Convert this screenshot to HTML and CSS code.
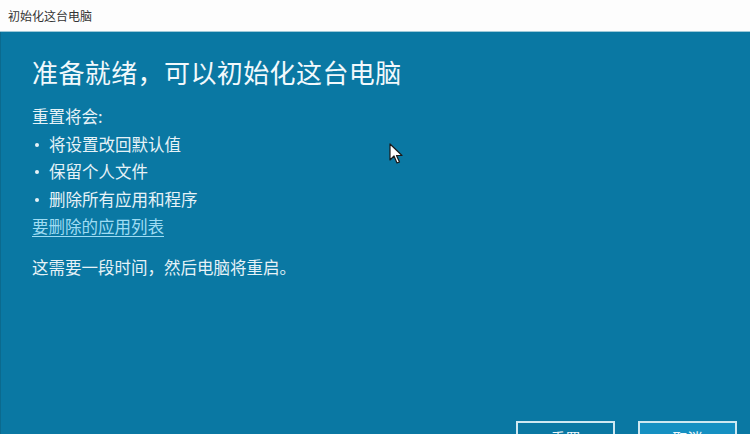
FILE: index.html
```html
<!DOCTYPE html>
<html lang="zh-CN">
<head>
<meta charset="utf-8">
<title>初始化这台电脑</title>
<link rel="stylesheet" href="styles.css">
</head>
<body>
<div class="window">
  <div class="titlebar">初始化这台电脑</div>
  <div class="content">
    <h1 class="heading">准备就绪，可以初始化这台电脑</h1>
    <p class="line">重置将会:</p>
    <ul class="list">
      <li>将设置改回默认值</li>
      <li>保留个人文件</li>
      <li>删除所有应用和程序</li>
    </ul>
    <a class="link" href="#">要删除的应用列表</a>
    <p class="line note">这需要一段时间，然后电脑将重启。</p>
    <div class="footer">
      <button class="btn">重置</button>
      <button class="btn primary">取消</button>
    </div>
  </div>
  <svg class="cursor" width="14" height="22" viewBox="0 0 14 22"><path d="M1 1 L1 17 L5 13 L8 20 L10.5 19 L7.5 12.5 L13 12.5 Z" fill="#ffffff" stroke="#1a1a1a" stroke-width="1.2" stroke-linejoin="round"/></svg>
</div>
</body>
</html>
```

FILE: styles.css
```css
html, body {
  margin: 0;
  padding: 0;
}
body {
  font-family: "Noto Sans CJK SC", "Noto Sans", sans-serif;
  background: #0a78a3;
}
.window {
  position: relative;
  width: 750px;
  height: 434px;
  overflow: hidden;
  background: #0a78a3;
  display: flex;
  flex-direction: column;
}
.titlebar {
  height: 32px;
  box-sizing: border-box;
  background: #fdfdfd;
  border-bottom: 1px solid #9ec9d8;
  color: #333;
  font-size: 12px;
  line-height: 31px;
  padding-left: 8px;
}
.content {
  flex: 1;
  display: flex;
  flex-direction: column;
  padding: 22px 0 0 31px;
  color: #e6f2f7;
  border-left: 1px solid #0b6a8e;
}
.heading {
  margin: 0;
  font-size: 26px;
  font-weight: 400;
  line-height: 36px;
  color: #f2f9fc;
  letter-spacing: 0.4px;
}
.line {
  margin: 13px 0 0 0;
  font-size: 16.5px;
  line-height: 27.5px;
}
.list {
  margin: 0;
  padding: 0;
  list-style: none;
  font-size: 16.5px;
  line-height: 27.5px;
}
.list li {
  position: relative;
  padding-left: 17px;
}
.list li::before {
  content: "";
  position: absolute;
  left: 3px;
  top: 12px;
  width: 4px;
  height: 4px;
  border-radius: 50%;
  background: #e6f2f7;
}
.link {
  align-self: flex-start;
  font-size: 16.5px;
  line-height: 27.5px;
  color: #9fdcf3;
  text-decoration: underline;
  text-underline-offset: 3px;
}
.note {
  margin-top: 13px;
}
.footer {
  margin-top: auto;
  display: flex;
  justify-content: flex-end;
  gap: 23px;
  padding-right: 13px;
  margin-bottom: -20px;
}
.btn {
  width: 99px;
  height: 33px;
  box-sizing: border-box;
  border: 2px solid #cfe8f1;
  background: #0a78a3;
  color: #f2f9fc;
  font-family: "Noto Sans CJK SC", "Noto Sans", sans-serif;
  font-size: 15px;
  padding: 0;
}
.btn.primary {
  background: #1590c2;
}
.cursor {
  position: absolute;
  left: 389px;
  top: 143px;
}
```
